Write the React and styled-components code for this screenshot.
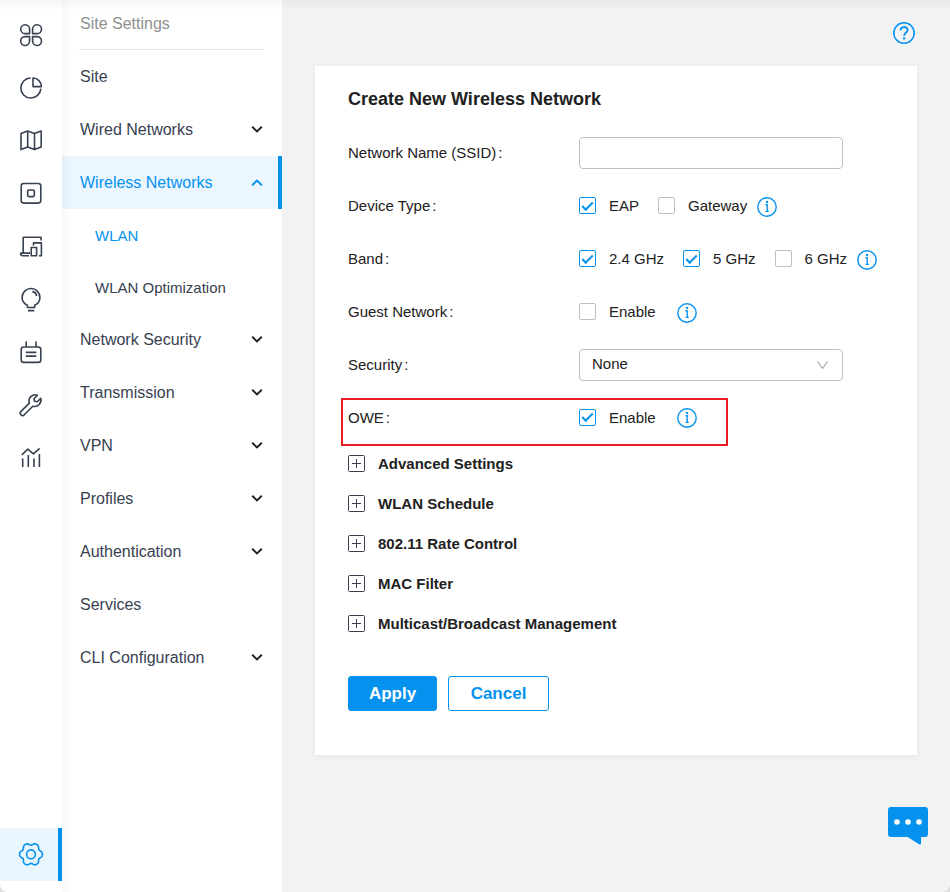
import React from "react";
import styled, { createGlobalStyle } from "styled-components";

const BLUE = "#0592ee";
const TINT = "#eaf6fe";
const INK = "#37414f";

const GlobalStyle = createGlobalStyle`
  *, *::before, *::after { box-sizing: border-box; }
  body {
    margin: 0;
    background: #dcdddf;
    color: #212121;
    font-family: "Liberation Sans", Arial, sans-serif;
    font-size: 15px;
  }
  button, input, select { font: inherit; color: inherit; }
`;

const Window = styled.div`
  position: relative;
  display: flex;
  min-height: 100vh;
  overflow: hidden;
  background: #f1f2f4;
  border-radius: 0 0 8px 8px;

  &::before {
    content: "";
    position: absolute;
    inset: 0 0 auto;
    height: 10px;
    background: linear-gradient(rgba(0, 0, 0, 0.04), transparent);
    pointer-events: none;
    z-index: 1;
  }
`;

const Rail = styled.nav`
  display: flex;
  flex-direction: column;
  flex: 0 0 62px;
  padding: 8px 0 11px;
  background: #fff;
`;

const RailButton = styled.button`
  display: flex;
  align-items: center;
  justify-content: center;
  flex: none;
  height: 53px;
  padding: 0;
  border: 0;
  background: ${(p) => (p.$active ? TINT : "transparent")};
  box-shadow: ${(p) => (p.$active ? `inset -4px 0 ${BLUE}` : "none")};
  color: ${(p) => (p.$active ? BLUE : INK)};
  margin-top: ${(p) => (p.$active ? "auto" : "0")};
  cursor: pointer;
`;

const Menu = styled.nav`
  flex: 0 0 220px;
  background: linear-gradient(90deg, #f8f8f9, #fff 10px);
`;

const MenuTitle = styled.h2`
  margin: 0 18px 0 17px;
  padding-left: 1px;
  height: 50px;
  border-bottom: 1px solid #e6e7e9;
  color: #8f8f8f;
  font-size: 16px;
  font-weight: 400;
  line-height: 47px;
`;

const MenuList = styled.ul`
  margin: 0;
  padding: 0;
  list-style: none;
`;

const MenuLink = styled.a`
  display: flex;
  align-items: center;
  justify-content: space-between;
  height: ${(p) => (p.$sub ? "52px" : "53px")};
  padding: 0 18px 0 ${(p) => (p.$sub ? "33px" : "18px")};
  background: ${(p) => (p.$open ? "rgba(5, 146, 238, 0.08)" : "transparent")};
  box-shadow: ${(p) => (p.$open ? `inset -4px 0 ${BLUE}` : "none")};
  color: ${(p) => (p.$open || p.$current ? BLUE : INK)};
  font-size: ${(p) => (p.$sub ? "15px" : "16px")};
  text-decoration: none;
`;

const Main = styled.main`
  position: relative;
  display: flex;
  flex-direction: column;
  flex: 1;
  min-width: 0;
  padding: 0 33px 48px;
`;

const TopBar = styled.header`
  display: flex;
  align-items: center;
  justify-content: flex-end;
  height: 66px;
`;

const IconButton = styled.button`
  display: flex;
  padding: 0;
  border: 0;
  background: none;
  color: ${BLUE};
  cursor: pointer;
`;

const HelpButton = styled(IconButton)`
  margin-right: 1px;
`;

const Card = styled.form`
  padding: 21px 33px 44px;
  background: #fff;
  box-shadow: 0 1px 6px rgba(0, 0, 0, 0.06);
`;

const CardTitle = styled.h1`
  margin: 0 0 14px;
  font-size: 18px;
  font-weight: 700;
  line-height: 25px;
`;

const Row = styled.div`
  position: relative;
  display: grid;
  grid-template-columns: 231px 1fr;
  align-items: center;
  height: 53px;
`;

const MarkedRow = styled(Row)`
  height: 52px;

  &::after {
    content: "";
    position: absolute;
    top: 7px;
    left: -7px;
    width: 387px;
    height: 48px;
    border: 2px solid #e91c24;
    pointer-events: none;
  }
`;

const Label = styled.label`
  &::after {
    content: ":";
    padding-left: 2px;
  }
`;

const Controls = styled.div`
  display: flex;
  align-items: center;
`;

const Option = styled.label`
  display: flex;
  align-items: center;
  gap: 13px;
  margin-right: ${(p) => p.$after || 19}px;
`;

const Tick = styled.input`
  appearance: none;
  display: grid;
  place-content: center;
  width: 17px;
  height: 17px;
  margin: 0;
  background: #fff;
  border: 1px solid #bcc0c3;
  border-radius: 2px;

  &:checked { border-color: ${BLUE}; }
  &:checked::before {
    content: "";
    width: 11px;
    height: 6px;
    border: solid ${BLUE};
    border-width: 0 0 2px 2px;
    transform: translateY(-1px) rotate(-45deg);
  }
`;

const TextBox = styled.input`
  width: 264px;
  height: 32px;
  padding: 0 12px;
  border: 1px solid #bcc0c3;
  border-radius: 4px;
  background: #fff;
`;

const SelectWrap = styled.div`
  display: grid;
  width: 264px;
  align-items: center;
  > * { grid-area: 1 / 1; }
  > svg { justify-self: end; margin-right: 14px; pointer-events: none; }
`;

const Select = styled.select`
  appearance: none;
  width: 100%;
  height: 32px;
  padding: 0 32px 2px 12px;
  border: 1px solid #bcc0c3;
  border-radius: 4px;
  background: #fff;
`;

const Expander = styled.button`
  display: flex;
  align-items: center;
  gap: 13px;
  height: 40px;
  padding: 0;
  border: 0;
  background: none;
  font-weight: 700;
  cursor: pointer;
`;

const Actions = styled.div`
  display: flex;
  gap: 11px;
  margin-top: 33px;
`;

const Action = styled.button`
  width: ${(p) => (p.$primary ? 89 : 101)}px;
  height: 35px;
  padding: 0;
  border: 1px solid ${BLUE};
  border-radius: 3px;
  background: ${(p) => (p.$primary ? BLUE : "#fff")};
  color: ${(p) => (p.$primary ? "#fff" : BLUE)};
  font-size: 17px;
  font-weight: 700;
  cursor: pointer;
`;

const ChatButton = styled(IconButton)`
  position: fixed;
  right: 22px;
  bottom: 47px;
`;

const railIcons = [
  ["Dashboard", <path d="M10.6 10.6H6.1A4.45 4.45 0 1 1 10.6 6.1ZM13.6 10.6V6.1A4.45 4.45 0 1 1 18 10.6ZM10.6 13.6V18.1A4.45 4.45 0 1 1 6.1 13.6ZM13.6 13.6H18A4.45 4.45 0 1 1 13.6 18.1Z" />],
  ["Statistics", <path d="M11.6 2A10 10 0 1 0 21.8 12.6M14 2V10.6H22.4A8.6 8.6 0 0 0 14 2Z" />],
  ["Map", <path d="M2 4.6 8.7 2.1 15.5 4.6 22.2 2.1V18.1L15.5 20.6 8.7 18.1 2 20.6ZM8.7 2.1V18.1M15.5 4.6V20.6" />],
  ["Devices", <><rect x="2.2" y="1.5" width="19.6" height="19.6" rx="2.5" /><rect x="8.7" y="8" width="6.6" height="6.6" rx="1" /></>],
  ["Clients", <path d="M22 5.5V2.3H4.2V18.1M11 18.1H1.7V19.1A1.6 1.6 0 0 0 3.3 20.7H10M12.2 12.5H17.6V20.7H12.2ZM14.5 10.5V7.9H22.4V20.7H20" />],
  ["Insight", <path d="M8.4 19.5V17.2C5.2 15.6 3.1 13 3.1 9.4A8.9 8.9 0 0 1 20.9 9.4C20.9 13 19 15.6 15.7 17.2V19.5ZM9 22.6H15.3M13.3 3.6A5 5 0 0 1 17.6 8" />],
  ["Logs", <><rect x="2.2" y="6" width="19.6" height="15.4" rx="2.5" /><path d="M7.2 0.4V6M17 0.4V6M6.8 11.4H17.3M6.8 15.1H17.3" /></>],
  ["Tools", <path d="M21.8 4.2 18.2 7.8 15.6 7.2 15 4.7 18.3 1.2A6.2 6.2 0 0 0 10.4 9.1L2 17.4A2.2 2.2 0 0 0 5.2 20.8L13.8 12.2A6.5 6.5 0 0 0 21.8 4.2Z" />],
  ["Reports", <path d="M3.7 11.5V20M9.3 8V20M15 11.5V20M20.4 7V20M2.8 7.8 8.8 2.2 14.4 6.8 20.6 1.4" />],
];

function LineIcon({ children }) {
  return (
    <svg width="24" height="24" viewBox="0 0 24 24" fill="none" stroke="currentColor" strokeWidth="1.6" strokeLinejoin="round" overflow="visible" aria-hidden="true">
      {children}
    </svg>
  );
}

// Six-lobed outline: the radius dips between lobes.
const gearPoints = Array.from({ length: 96 }, (_, i) => {
  const a = (i / 96) * Math.PI * 2;
  const r = 11.4 - 2.3 * Math.abs(Math.sin(3 * a)) ** 3;
  return `${(12 + r * Math.cos(a)).toFixed(2)},${(11.3 + r * Math.sin(a)).toFixed(2)}`;
}).join(" ");

function GearIcon() {
  return (
    <LineIcon>
      <polygon points={gearPoints} />
      <circle cx="12" cy="11.3" r="4.4" />
    </LineIcon>
  );
}

function Chevron({ up }) {
  return (
    <svg width="14" height="14" viewBox="0 0 14 14" fill="none" stroke={up ? BLUE : "#212121"} strokeWidth="2" aria-hidden="true">
      <path d={up ? "M2.2 9.2 7 4.6 11.8 9.2" : "M2.2 3.8 7 8.4 11.8 3.8"} />
    </svg>
  );
}

function Info({ label }) {
  return (
    <IconButton type="button" aria-label={label}>
      <svg width="20" height="22" viewBox="0 0 20 22" fill="none" stroke="currentColor" aria-hidden="true">
        <circle cx="10" cy="12" r="9.2" strokeWidth="1.4" />
        <path d="M8.4 9.8H10.2V16.4M8.6 16.4H11.8" strokeWidth="1.4" />
        <circle cx="10" cy="7" r="1.2" fill="currentColor" stroke="none" />
      </svg>
    </IconButton>
  );
}

function Check({ children, checked, after }) {
  return (
    <Option $after={after}>
      <Tick type="checkbox" defaultChecked={checked} />
      {children}
    </Option>
  );
}

const menu = [
  { name: "Site" },
  { name: "Wired Networks", more: true },
  { name: "Wireless Networks", more: true, open: true, children: ["WLAN", "WLAN Optimization"] },
  { name: "Network Security", more: true },
  { name: "Transmission", more: true },
  { name: "VPN", more: true },
  { name: "Profiles", more: true },
  { name: "Authentication", more: true },
  { name: "Services" },
  { name: "CLI Configuration", more: true },
];

const sections = ["Advanced Settings", "WLAN Schedule", "802.11 Rate Control", "MAC Filter", "Multicast/Broadcast Management"];

export default function App() {
  return (
    <>
      <GlobalStyle />
      <Window>
        <Rail aria-label="Main">
          {railIcons.map(([name, shape]) => (
            <RailButton key={name} type="button" aria-label={name}>
              <LineIcon>{shape}</LineIcon>
            </RailButton>
          ))}
          <RailButton type="button" aria-label="Settings" $active>
            <GearIcon />
          </RailButton>
        </Rail>

        <Menu aria-label="Site Settings">
          <MenuTitle>Site Settings</MenuTitle>
          <MenuList>
            {menu.map((item) => (
              <li key={item.name}>
                <MenuLink href="#" $open={item.open}>
                  {item.name}
                  {item.more && <Chevron up={item.open} />}
                </MenuLink>
                {item.children && (
                  <MenuList>
                    {item.children.map((child, i) => (
                      <li key={child}>
                        <MenuLink href="#" $sub $current={i === 0}>{child}</MenuLink>
                      </li>
                    ))}
                  </MenuList>
                )}
              </li>
            ))}
          </MenuList>
        </Menu>

        <Main>
          <TopBar>
            <HelpButton type="button" aria-label="Help">
              <svg width="24" height="24" viewBox="0 0 24 24" fill="none" stroke="currentColor" aria-hidden="true">
                <circle cx="12" cy="12" r="10.2" strokeWidth="1.5" />
                <path d="M8.6 9.4C8.6 4.9 15.6 5 15.6 9.1 15.6 11.6 12.1 11.9 12.1 14.8" strokeWidth="1.8" />
                <circle cx="12.1" cy="17.4" r="1.2" fill="currentColor" stroke="none" />
              </svg>
            </HelpButton>
          </TopBar>

          <Card>
            <CardTitle>Create New Wireless Network</CardTitle>
            <Row>
              <Label htmlFor="ssid">Network Name (SSID)</Label>
              <TextBox id="ssid" type="text" />
            </Row>
            <Row role="group" aria-label="Device Type">
              <Label as="span">Device Type</Label>
              <Controls>
                <Check checked>EAP</Check>
                <Check after={10}>Gateway</Check>
                <Info label="About device types" />
              </Controls>
            </Row>
            <Row role="group" aria-label="Band">
              <Label as="span">Band</Label>
              <Controls>
                <Check checked>2.4 GHz</Check>
                <Check checked>5 GHz</Check>
                <Check after={10}>6 GHz</Check>
                <Info label="About bands" />
              </Controls>
            </Row>
            <Row role="group" aria-label="Guest Network">
              <Label as="span">Guest Network</Label>
              <Controls>
                <Check after={21}>Enable</Check>
                <Info label="About guest network" />
              </Controls>
            </Row>
            <Row>
              <Label htmlFor="security">Security</Label>
              <SelectWrap>
                <Select id="security" defaultValue="None">
                  <option>None</option>
                </Select>
                <svg width="13" height="12" viewBox="0 0 13 12" fill="none" stroke="#b4b8bb" strokeWidth="1.3" aria-hidden="true">
                  <path d="M1.5 2.5 6.5 9.5 11.5 2.5" />
                </svg>
              </SelectWrap>
            </Row>
            <MarkedRow role="group" aria-label="OWE">
              <Label as="span">OWE</Label>
              <Controls>
                <Check checked after={21}>Enable</Check>
                <Info label="About OWE" />
              </Controls>
            </MarkedRow>
            {sections.map((name) => (
              <Expander key={name} type="button" aria-expanded="false">
                <svg width="17" height="17" viewBox="0 0 17 17" fill="none" stroke={INK} aria-hidden="true">
                  <rect x="0.5" y="0.5" width="16" height="16" rx="1" />
                  <path d="M4 8.5H13M8.5 4V13" />
                </svg>
                {name}
              </Expander>
            ))}
            <Actions>
              <Action type="button" $primary>Apply</Action>
              <Action type="button">Cancel</Action>
            </Actions>
          </Card>
        </Main>
      </Window>
      <ChatButton type="button" aria-label="Chat">
        <svg width="40" height="38" viewBox="0 0 40 38" aria-hidden="true">
          <path d="M3 0H37A3 3 0 0 1 40 3V27A3 3 0 0 1 37 30H33V36.5Q33 38 31.5 37.4L19.5 30H3A3 3 0 0 1 0 27V3A3 3 0 0 1 3 0Z" fill={BLUE} />
          <g fill="#fff">
            <circle cx="9" cy="15" r="2.8" />
            <circle cx="20" cy="15" r="2.8" />
            <circle cx="31" cy="15" r="2.8" />
          </g>
        </svg>
      </ChatButton>
    </>
  );
}
